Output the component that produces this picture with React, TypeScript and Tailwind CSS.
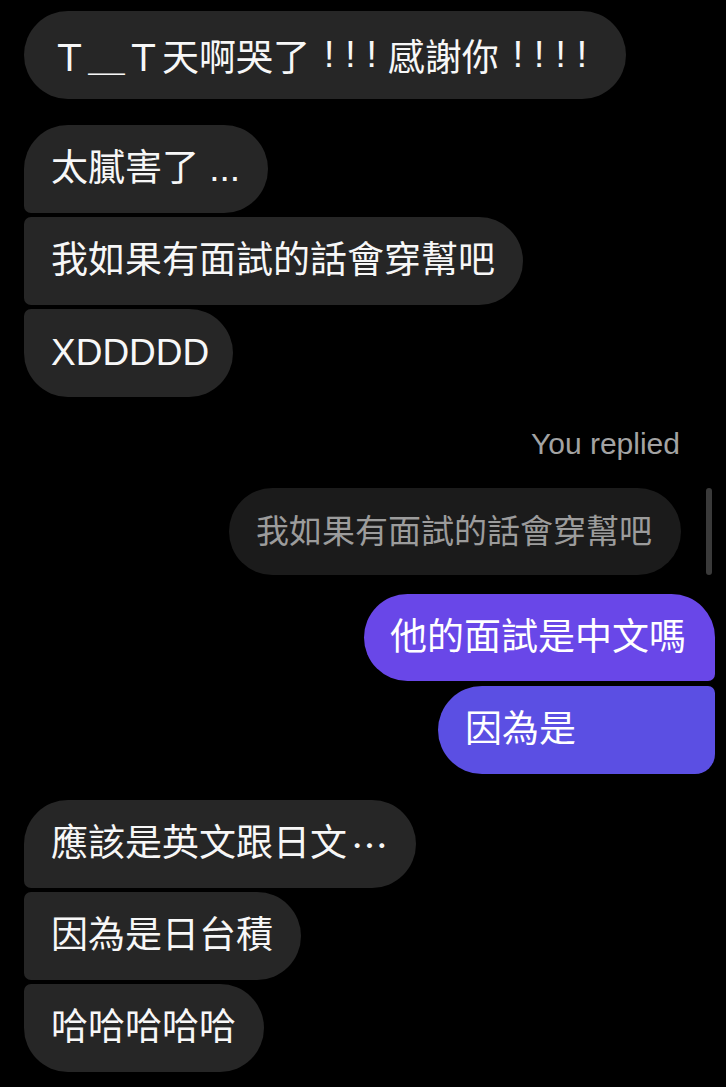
const font = "font-['Liberation_Sans','Noto_Sans_CJK_TC',sans-serif]";
const cjk = "font-['Noto_Sans_CJK_TC',sans-serif]";

type Pos = "single" | "first" | "middle" | "last";

function leftRadius(pos: Pos) {
  if (pos === "first") return "rounded-[44px] rounded-bl-[7px]";
  if (pos === "middle") return "rounded-[44px] rounded-tl-[7px] rounded-bl-[7px]";
  if (pos === "last") return "rounded-[44px] rounded-tl-[7px]";
  return "rounded-[44px]";
}

function Incoming({ pos, children }: { pos: Pos; children: React.ReactNode }) {
  return (
    <div className="flex">
      <div
        className={`flex h-[88px] items-center whitespace-nowrap bg-[#262626] pl-[27px] pr-[28px] text-[37px] leading-[44px] text-[#f7f7f7] ${leftRadius(pos)}`}
      >
        {children}
      </div>
    </div>
  );
}

export default function App() {
  return (
    <div className={`min-h-[1087px] w-full bg-black pt-[11px] ${font}`}>
      <div className="pl-[24px]">
        <Incoming pos="single">
          <span className={cjk}>Ｔ＿Ｔ天啊哭了</span>
          <span className="ml-[14px] tracking-[11px]">!!!</span>
          <span className={cjk}>感謝你</span>
          <span className="ml-[14px] tracking-[11px]">!!!!</span>
        </Incoming>
      </div>

      <div className="mt-[26px] flex flex-col gap-[4px] pl-[24px]">
        <Incoming pos="first">太膩害了 ...</Incoming>
        <Incoming pos="middle">我如果有面試的話會穿幫吧</Incoming>
        <Incoming pos="last">
          <span className="-mr-[4px]">XDDDDD</span>
        </Incoming>
      </div>

      <div className="mt-[30px] pr-[46px] text-right text-[30px] leading-[34px] text-[#a3a3a3]">You replied</div>

      <div className="mt-[27px] flex items-stretch justify-end gap-[25px] pr-[14px]">
        <div className="flex h-[87px] items-center rounded-[44px] bg-[#1b1b1b] pl-[27px] pr-[29px] text-[33px] leading-[40px] text-[#9c9c9c]">
          我如果有面試的話會穿幫吧
        </div>
        <div className="w-[6px] rounded-full bg-[#3a3a3a]" />
      </div>

      <div className="mt-[19px] flex flex-col items-end gap-[5px] pr-[11px]">
        <div className="flex h-[87px] items-center rounded-[44px] rounded-br-[7px] bg-[#6947e8] pl-[26px] pr-[29px] text-[37px] leading-[44px] text-white">
          他的面試是中文嗎
        </div>
        <div className="flex h-[88px] items-center rounded-[44px] rounded-tr-[7px] rounded-br-[20px] bg-[#5b4fe3] pl-[27px] pr-[139px] text-[37px] leading-[44px] text-white">
          因為是
        </div>
      </div>

      <div className="mt-[26px] flex flex-col gap-[4px] pb-[15px] pl-[24px]">
        <Incoming pos="first">
          應該是英文跟日文<span className={`${cjk} ml-[4px]`}>…</span>
        </Incoming>
        <Incoming pos="middle">因為是日台積</Incoming>
        <Incoming pos="last">哈哈哈哈哈</Incoming>
      </div>
    </div>
  );
}
